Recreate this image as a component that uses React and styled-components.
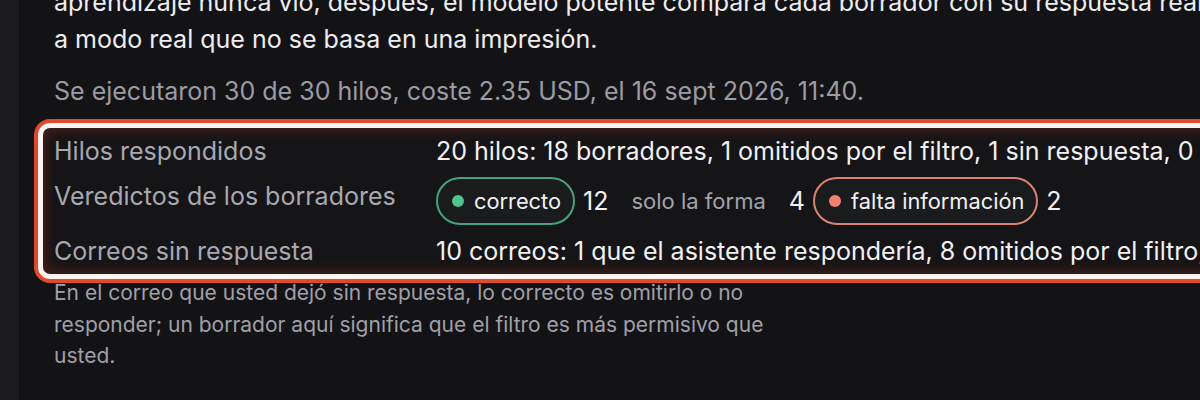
import styled, { createGlobalStyle } from 'styled-components';

const GlobalStyle = createGlobalStyle`
	html, body {
		margin: 0;
		background: #131316;
		overflow: hidden;
	}
	body {
		font-family: Inter, 'Noto Sans', sans-serif;
	}
`;

const Page = styled.div`
	display: flex;
	min-height: 400px;
`;

const SideStrip = styled.div`
	width: 19px;
	flex: none;
	background: #1b1b1e;
`;

const Main = styled.main`
	flex: none;
	width: 1400px;
	padding-left: 35px;
	margin-top: -16px;
`;

const Lead = styled.p`
	margin: 0;
	font-size: 25px;
	line-height: 37px;
	color: #ededf0;
	white-space: nowrap;
`;

const Meta = styled.p`
	margin: 16px 0 0;
	font-size: 25px;
	line-height: 34px;
	color: #9b9ba4;
`;

const Highlight = styled.section`
	margin-top: 15px;
	margin-left: -16px;
	border: 5px solid #fcf5f2;
	border-radius: 12px;
	box-shadow: 0 0 0 4px #df4a2c, inset 0 0 16px rgba(190, 60, 40, 0.4);
	background: #151416;
	padding: 4px 11px;
	display: grid;
	grid-template-columns: 382px auto;
	row-gap: 7px;
	align-items: start;
`;

const Label = styled.div`
	font-size: 25px;
	line-height: 38px;
	color: #a8a8b0;
	white-space: nowrap;
`;

const Value = styled.div`
	font-size: 25px;
	line-height: 38px;
	color: #f1f1f3;
	white-space: nowrap;
`;

const VerdictRow = styled.div`
	display: flex;
	align-items: center;
	gap: 8px;
`;

const tones = {
	good: { border: '#44a27c', dot: '#4fc38e' },
	bad: { border: '#db8371', dot: '#f0806f' },
	plain: { border: 'transparent', dot: null },
};

const Chip = styled.span`
	display: inline-flex;
	align-items: center;
	gap: 10px;
	height: 48px;
	box-sizing: border-box;
	padding: ${(p) => (p.tone === 'plain' ? '0 13px' : '0 12px 0 14px')};
	border: 2px solid ${(p) => tones[p.tone].border};
	border-radius: 24px;
	background: ${(p) => (p.tone === 'plain' ? 'transparent' : '#1a1b1d')};
	font-size: ${(p) => (p.tone === 'plain' ? '22px' : '21.8px')};
	color: ${(p) => (p.tone === 'plain' ? '#a3a3ab' : '#f1f1f3')};
	white-space: nowrap;
`;

const Dot = styled.span`
	width: 12px;
	height: 12px;
	border-radius: 50%;
	background: ${(p) => tones[p.tone].dot};
`;

const Count = styled.span`
	font-size: 25px;
	color: #f1f1f3;
`;

const Note = styled.p`
	margin: -2px 0 0;
	width: 760px;
	font-size: 21px;
	line-height: 31.5px;
	color: #a0a0a8;
`;

const verdicts = [
	{ label: 'correcto', tone: 'good', count: 12 },
	{ label: 'solo la forma', tone: 'plain', count: 4 },
	{ label: 'falta información', tone: 'bad', count: 2 },
];

function App() {
	return (
		<>
			<GlobalStyle />
			<Page>
				<SideStrip />
				<Main>
					<Lead>
						aprendizaje nunca vio, después, el modelo potente compara cada borrador con su respuesta real
						<br />a modo real que no se basa en una impresión.
					</Lead>
					<Meta>Se ejecutaron 30 de 30 hilos, coste 2.35 USD, el 16 sept 2026, 11:40.</Meta>

					<Highlight>
						<Label>Hilos respondidos</Label>
						<Value>20 hilos: 18 borradores, 1 omitidos por el filtro, 1 sin respuesta, 0 errores</Value>

						<Label>Veredictos de los borradores</Label>
						<VerdictRow>
							{verdicts.map((v) => (
								<VerdictRow key={v.label}>
									<Chip tone={v.tone}>
										{v.tone !== 'plain' && <Dot tone={v.tone} />}
										{v.label}
									</Chip>
									<Count>{v.count}</Count>
								</VerdictRow>
							))}
						</VerdictRow>

						<Label>Correos sin respuesta</Label>
						<Value>10 correos: 1 que el asistente respondería, 8 omitidos por el filtro, 1 sin borrador</Value>
					</Highlight>

					<Note>
						En el correo que usted dejó sin respuesta, lo correcto es omitirlo o no responder; un borrador aquí
						significa que el filtro es más permisivo que usted.
					</Note>
				</Main>
			</Page>
		</>
	);
}

export default App;
